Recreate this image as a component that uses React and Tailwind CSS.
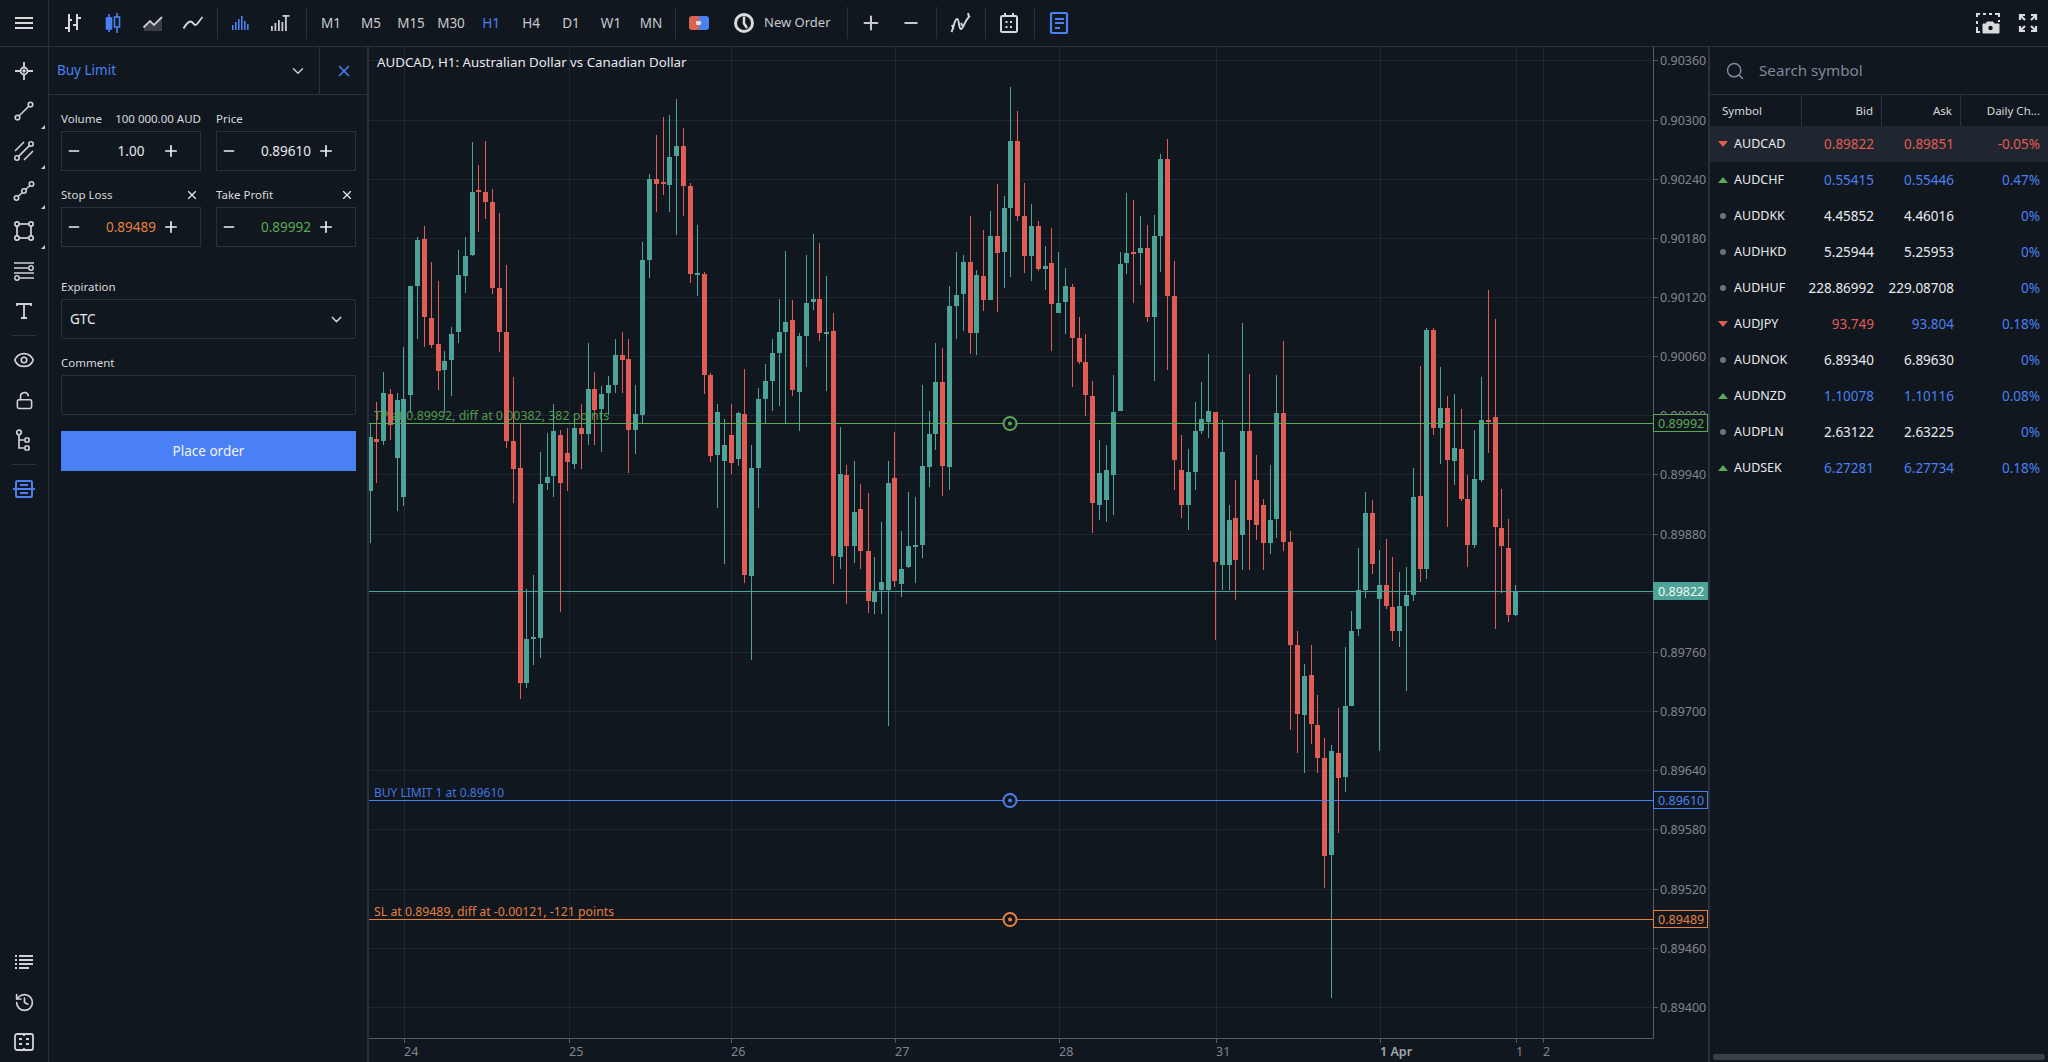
import React from "react";
import { ChevronDown, X, Plus, Minus, Search, Eye, LockOpen, History } from "lucide-react";

const G = "#4ea398";
const R = "#e05c54";
const GREEN = "#5ba855";
const BLUE = "#4a80f0";
const ORANGE = "#e5803f";

// x, color, wick top, body top, body bottom, wick bottom (page px)
const candles = [
  [370,G,423,437,491,543],[376,R,402,439,442,483],[383,G,372,393,441,445],[390,R,389,394,425,440],[397,G,393,400,458,511],
  [403,G,347,399,497,506],[410,G,286,286,395,413],[417,G,237,240,286,339],[424,R,226,239,317,347],[431,R,262,318,345,348],
  [438,R,281,344,371,390],[444,G,351,361,370,413],[451,G,327,334,360,396],[458,G,250,275,332,343],[465,G,237,256,276,293],
  [472,G,142,192,255,256],[478,R,165,190,192,232],[485,R,141,192,202,219],[492,R,189,202,288,294],[499,R,213,288,332,352],
  [506,R,265,332,441,448],[513,R,377,441,469,503],[520,R,423,468,683,699],[526,G,589,639,683,688],[533,G,575,637,639,665],
  [540,G,452,484,638,658],[547,G,433,477,483,490],[553,G,404,431,476,497],[560,R,430,435,483,612],[567,R,428,453,462,491],
  [574,G,418,428,464,469],[581,R,404,428,434,469],[588,G,343,389,434,445],[594,R,372,389,410,445],[601,G,386,394,409,452],
  [608,G,376,385,393,415],[615,G,339,355,385,393],[622,R,332,355,360,393],[628,R,339,359,430,473],[635,G,385,414,430,454],
  [642,G,242,260,415,423],[649,G,174,179,260,278],[656,R,135,179,184,212],[663,R,117,182,184,195],[669,G,115,157,185,212],
  [676,G,99,146,156,235],[683,R,128,146,186,216],[690,R,183,186,274,283],[697,G,225,273,275,296],[704,R,272,274,375,394],
  [710,R,373,375,456,462],[717,G,404,412,455,508],[724,G,419,445,461,564],[731,R,404,435,463,474],[738,G,412,413,459,466],
  [744,R,369,414,575,583],[751,G,445,468,576,660],[758,G,388,399,468,508],[765,G,364,381,399,423],[772,G,339,353,381,411],
  [779,G,299,332,353,406],[785,G,251,322,332,423],[792,R,300,320,390,396],[799,G,333,336,392,431],[806,G,255,303,336,367],
  [813,G,234,299,302,310],[819,R,243,299,333,341],[826,G,276,332,334,391],[833,R,313,331,556,584],[840,G,427,474,557,569],
  [846,R,465,475,546,604],[854,G,461,512,546,563],[860,R,484,509,551,569],[868,R,493,551,601,613],[874,G,557,591,602,614],
  [881,G,522,582,590,614],[888,G,461,483,590,726],[894,R,432,478,581,587],[901,G,531,569,584,597],[908,G,492,546,567,568],
  [915,G,497,545,546,583],[922,G,385,466,545,558],[929,G,411,434,467,487],[935,G,343,382,434,450],[942,R,348,382,466,496],
  [949,G,286,306,467,490],[956,G,252,295,306,339],[963,G,255,262,294,331],[970,R,216,262,333,354],[976,G,270,275,333,355],
  [983,R,230,276,300,311],[990,G,211,236,300,300],[997,R,184,236,253,312],[1004,G,196,208,252,288],[1010,G,87,141,208,277],
  [1017,R,111,141,216,221],[1024,R,183,216,256,273],[1031,G,204,226,256,281],[1038,R,221,226,269,271],[1045,G,246,266,269,290],
  [1051,R,228,263,304,351],[1058,G,252,303,313,313],[1065,G,268,286,302,334],[1072,R,284,287,338,387],[1079,R,317,338,362,364],
  [1085,R,334,362,395,416],[1092,R,381,396,503,533],[1099,G,440,473,505,520],[1106,G,445,470,500,522],[1113,G,375,412,475,515],
  [1120,G,252,264,411,411],[1126,G,193,253,263,274],[1133,R,200,252,253,303],[1140,G,216,248,253,285],[1147,R,225,248,317,322],
  [1154,G,215,236,317,381],[1160,G,154,159,236,272],[1167,R,139,159,296,370],[1174,R,261,296,460,490],[1181,R,435,470,505,518],
  [1188,G,449,472,505,530],[1195,G,402,431,472,490],[1201,G,382,419,431,434],[1208,G,354,411,422,438],[1215,R,412,412,562,640],
  [1222,G,420,452,565,590],[1229,G,505,520,565,590],[1235,R,480,518,560,600],[1242,G,323,431,535,570],[1249,R,374,431,520,570],
  [1256,R,455,480,525,540],[1263,R,499,505,543,570],[1270,G,465,520,543,554],[1276,G,375,413,519,538],[1283,R,341,413,542,551],
  [1290,R,531,542,645,730],[1297,R,631,645,714,753],[1304,G,664,676,715,773],[1311,R,645,675,724,744],[1317,R,695,725,758,773],
  [1324,R,738,758,856,888],[1331,G,745,751,855,998],[1338,R,708,753,778,833],[1345,G,647,706,777,792],[1351,G,611,631,706,706],
  [1358,G,548,590,629,636],[1365,G,492,513,590,598],[1372,R,500,513,564,574],[1379,G,550,585,599,751],[1386,R,539,585,606,609],
  [1392,R,557,607,631,641],[1399,G,572,606,631,647],[1406,G,567,595,606,691],[1413,G,468,497,595,601],[1420,R,366,496,569,582],
  [1426,G,328,330,569,579],[1433,R,328,330,428,435],[1440,G,367,408,428,464],[1447,R,396,408,460,527],[1454,G,394,448,461,485],
  [1461,R,409,449,499,501],[1467,R,475,499,545,567],[1474,G,430,479,545,548],[1481,G,377,420,480,482],[1488,R,290,420,421,453],
  [1495,R,319,417,527,629],[1501,R,489,528,546,593],[1508,R,519,548,615,622],[1515,G,585,591,615,616],
];

const prices = ["0.90360","0.90300","0.90240","0.90180","0.90120","0.90060","0.90000","0.89940","0.89880","0.89820","0.89760","0.89700","0.89640","0.89580","0.89520","0.89460","0.89400"];
const gridY = [60,120,179,238,297,356,415,474,534,593,652,711,770,829,889,948,1007];
const gridX = [404,569,731,895,1059,1216,1380,1516,1543];
const days = [["24",404],["25",569],["26",731],["27",895],["28",1059],["31",1216],["1 Apr",1380],["1",1516],["2",1543]];

const symbols = [
  ["AUDCAD","d","0.89822","0.89851","-0.05%","r","r","r"],
  ["AUDCHF","u","0.55415","0.55446","0.47%","b","b","b"],
  ["AUDDKK","n","4.45852","4.46016","0%","w","w","b"],
  ["AUDHKD","n","5.25944","5.25953","0%","w","w","b"],
  ["AUDHUF","n","228.86992","229.08708","0%","w","w","b"],
  ["AUDJPY","d","93.749","93.804","0.18%","r","b","b"],
  ["AUDNOK","n","6.89340","6.89630","0%","w","w","b"],
  ["AUDNZD","u","1.10078","1.10116","0.08%","b","b","b"],
  ["AUDPLN","n","2.63122","2.63225","0%","w","w","b"],
  ["AUDSEK","u","6.27281","6.27734","0.18%","b","b","b"],
];
const tone = { r: "text-[#e05c54]", b: "text-[#4a80f0]", w: "text-[#e8eaec]" };

function PriceBox({ y, c, text }) {
  return (
    <g>
      <rect x="1653.5" y={y + 0.5} width="54" height="17" fill="#10171f" stroke={c} />
      <text x="1658" y={y + 14} fill={c} fontSize="12.5" shapeRendering="auto">{text}</text>
    </g>
  );
}

function Chart() {
  return (
    <svg viewBox="369 47 1339 1015" className="w-full h-full block" shapeRendering="crispEdges" fontSize="13">
      {gridY.map((y) => <rect key={y} x="369" y={y} width="1284" height="1" fill="#1f2631" />)}
      {gridX.map((x) => <rect key={x} x={x} y="47" width="1" height="991" fill="#1f2631" />)}
      {candles.map(([x, c, wt, bt, bb, wb]) => (
        <g key={x} fill={c}>
          <rect x={x} y={wt} width="1" height={wb - wt} />
          <rect x={x - 2} y={bt} width="5" height={Math.max(bb - bt, 2)} />
        </g>
      ))}

      <rect x="369" y="423" width="1284" height="1" fill={GREEN} />
      <rect x="369" y="591" width="1284" height="1" fill={G} />
      <rect x="369" y="800" width="1284" height="1" fill={BLUE} />
      <rect x="369" y="919" width="1284" height="1" fill={ORANGE} />

      <g shapeRendering="auto">
        <text x="377" y="67" fill="#e8eaec" fontSize="13.3">AUDCAD, H1: Australian Dollar vs Canadian Dollar</text>
        <text x="374" y="420" fill={GREEN} opacity="0.9" fontSize="12.4">TP at 0.89992, diff at 0.00382, 382 points</text>
        <text x="374" y="797" fill={BLUE} opacity="0.9" fontSize="12">BUY LIMIT 1 at 0.89610</text>
        <text x="374" y="916" fill={ORANGE} fontSize="12.3">SL at 0.89489, diff at -0.00121, -121 points</text>
        {[[423, GREEN], [800, BLUE], [919, ORANGE]].map(([y, c]) => (
          <g key={y}>
            <circle cx="1010" cy={y + 0.5} r="6.5" fill="#10171f" stroke={c} strokeWidth="2" />
            <circle cx="1010" cy={y + 0.5} r="2" fill={c} />
          </g>
        ))}
      </g>

      <rect x="1653" y="47" width="1" height="992" fill="#555b66" />
      <rect x="369" y="1038" width="1285" height="1" fill="#555b66" />
      {gridY.map((y, i) => (
        <g key={y}>
          <rect x="1653" y={y} width="5" height="1" fill="#555b66" />
          <text x="1660" y={y + 5} fill="#80868d" shapeRendering="auto" fontSize="12.5">{prices[i]}</text>
        </g>
      ))}
      {days.map(([t, x]) => (
        <g key={t}>
          <rect x={x} y="1039" width="1" height="4" fill="#555b66" />
          <text x={x} y="1056" fill={t === "1 Apr" ? "#a5a9ae" : "#80868d"} fontWeight={t === "1 Apr" ? 600 : 400} shapeRendering="auto" fontSize="12.5">{t}</text>
        </g>
      ))}

      <PriceBox y={414} c={GREEN} text="0.89992" />
      <rect x="1653" y="582" width="55" height="18" fill={G} />
      <text x="1658" y="596" fill="#f4f6f6" fontSize="12.5" shapeRendering="auto">0.89822</text>
      <PriceBox y={791} c={BLUE} text="0.89610" />
      <PriceBox y={910} c={ORANGE} text="0.89489" />
    </svg>
  );
}

const Ico = ({ children, className = "text-[#d8dadc]", size = 24 }) => (
  <svg width={size} height={size} viewBox="0 0 24 24" fill="none" stroke="currentColor" strokeWidth="1.7" className={className}>
    {children}
  </svg>
);

const TopBtn = ({ children, active }) => (
  <div className={"w-[40px] h-full flex items-center justify-center shrink-0 " + (active ? "text-[#4a80f0]" : "text-[#c8cacd]")}>{children}</div>
);
const TopSep = ({ w = "w-[8px]" }) => (
  <div className={w + " h-full flex items-center justify-center shrink-0"}>
    <div className="w-px h-[32px] bg-[#2a303c]" />
  </div>
);

function TopBar() {
  return (
    <div className="h-[47px] shrink-0 flex border-b border-[#2a303c]">
      <div className="w-[49px] shrink-0 border-r border-[#2a303c] flex items-center justify-center">
        <div className="w-[18px] flex flex-col gap-[3px]">
          <div className="h-[2px] bg-[#d8dadc]" />
          <div className="h-[2px] bg-[#d8dadc]" />
          <div className="h-[2px] bg-[#d8dadc]" />
        </div>
      </div>
      <div className="w-[4px] shrink-0" />
      <TopBtn>
        <Ico><path d="M8 3v18M8 9h3M4 17h4M16 3v16M16 7h4M12 14h4" strokeWidth="2" /></Ico>
      </TopBtn>
      <TopBtn active>
        <svg width="24" height="24" viewBox="0 0 24 24" fill="none" stroke="currentColor" strokeWidth="1.6">
          <path d="M8 3v18M16 2v20" />
          <rect x="5.5" y="7" width="5" height="11" fill="currentColor" />
          <rect x="13.5" y="6" width="5" height="10" fill="#10171f" />
        </svg>
      </TopBtn>
      <TopBtn>
        <svg width="24" height="24" viewBox="0 0 24 24" fill="none">
          <path d="M3 20l0-4 6-6 4 4 8-8v14z" fill="#3a3f46" />
          <path d="M2.5 16.5l6.5-6.5 4 4 8-8" stroke="#c8cacd" strokeWidth="1.8" />
        </svg>
      </TopBtn>
      <TopBtn>
        <Ico><path d="M2.5 17.5c3-5 4.5-7 7-7s3 3.5 5 3.5 3.5-4 7-8" strokeWidth="1.8" /></Ico>
      </TopBtn>
      <TopSep />
      <TopBtn active>
        <svg width="20" height="20" viewBox="0 0 20 20" fill="currentColor">
          <rect x="1" y="12" width="1.6" height="5" /><rect x="4" y="9" width="1.6" height="8" /><rect x="7" y="6" width="1.6" height="11" />
          <rect x="10" y="3" width="1.6" height="14" /><rect x="13" y="8" width="1.6" height="9" /><rect x="16" y="11" width="1.6" height="6" />
        </svg>
      </TopBtn>
      <TopBtn>
        <svg width="22" height="22" viewBox="0 0 22 22" fill="currentColor">
          <rect x="1" y="14" width="1.8" height="5" /><rect x="4.5" y="11" width="1.8" height="8" /><rect x="8" y="8" width="1.8" height="11" />
          <rect x="11.5" y="10" width="1.8" height="9" /><rect x="15" y="4" width="1.8" height="15" /><rect x="12.5" y="3" width="7" height="1.8" />
        </svg>
      </TopBtn>
      <TopSep w="w-[10px]" />
      {["M1", "M5", "M15", "M30", "H1", "H4", "D1", "W1", "MN"].map((t) => (
        <div key={t} className={"w-[40px] shrink-0 flex items-center justify-center text-[13.5px] " + (t === "H1" ? "text-[#4a80f0]" : "text-[#c8cacd]")}>{t}</div>
      ))}
      <TopSep />
      <TopBtn>
        <svg width="20" height="14" viewBox="0 0 20 14">
          <path d="M3 0h7v14H3a3 3 0 0 1-3-3V3a3 3 0 0 1 3-3z" fill="#d9634f" />
          <path d="M10 0h7a3 3 0 0 1 3 3v8a3 3 0 0 1-3 3h-7z" fill="#4a80f0" />
          <rect x="7" y="5" width="5" height="4" rx="1" fill="#dddddd" />
        </svg>
      </TopBtn>
      <div className="w-[124px] shrink-0 flex items-center pl-[15px] gap-[10px] text-[13px] text-[#c8cacd]">
        <svg width="20" height="20" viewBox="0 0 20 20" fill="none" stroke="#d8dadc">
          <circle cx="10" cy="10" r="8.5" strokeWidth="3" />
          <path d="M10 3.5v7l3 4.5" strokeWidth="2.5" />
        </svg>
        <span>New Order</span>
      </div>
      <TopSep />
      <TopBtn><Plus size={22} strokeWidth={2.2} /></TopBtn>
      <TopBtn><Minus size={20} strokeWidth={2.2} /></TopBtn>
      <TopSep w="w-[10px]" />
      <TopBtn>
        <Ico>
          <path d="M2.5 21c2.500-5 3-13 5.500-13s1.500 10 4 10 3.500-9 9-13" strokeWidth="1.900" />
          <path d="M3 14l1.500 4M12 12l1.500 3M19 2l1 4" strokeWidth="1.900" />
        </Ico>
      </TopBtn>
      <TopSep />
      <TopBtn>
        <svg width="20" height="22" viewBox="0 0 20 22" fill="none" stroke="#d8dadc" strokeWidth="2">
          <rect x="2" y="4" width="16" height="16" rx="1.5" />
          <path d="M6 1v4M14 1v4" />
          <path d="M6.5 10h2M11 10h2M6.5 15h2M11 15h2" strokeWidth="2" />
        </svg>
      </TopBtn>
      <TopSep w="w-[10px]" />
      <TopBtn active>
        <svg width="20" height="24" viewBox="0 0 20 24" fill="none" stroke="currentColor" strokeWidth="2.2">
          <rect x="2" y="2" width="16" height="20" rx="1" />
          <path d="M6 8h9M6 12h9M6 17h5" />
        </svg>
      </TopBtn>
      <div className="flex-1" />
      <TopBtn>
        <svg width="24" height="22" viewBox="0 0 24 22" fill="none" stroke="#d8dadc" strokeWidth="2">
          <path d="M1 5V2h3M7 2h3M13 2h3M19 2h4v3M1 9v3M1 15v3M1 18v2h3M23 8v2" />
          <path d="M7 12h3l1-2h6l1 2h5v9H7z" fill="#d8dadc" strokeWidth="1" />
          <circle cx="14.500" cy="16" r="2.200" fill="#10171f" stroke="none" />
        </svg>
      </TopBtn>
      <TopBtn>
        <svg width="20" height="20" viewBox="0 0 20 20" fill="none" stroke="#d8dadc" strokeWidth="2.2">
          <path d="M2 7V2h5M2 2l5 5M18 7V2h-5M18 2l-5 5M2 13v5h5M2 18l5-5M18 13v5h-5M18 18l-5-5" />
        </svg>
      </TopBtn>
    </div>
  );
}

const SideBtn = ({ children, corner, active }) => (
  <div className={"relative h-[40px] flex items-center justify-center " + (active ? "text-[#4a80f0]" : "text-[#d0d2d5]")}>
    {children}
    {corner && <div className="absolute right-[3px] bottom-[2px] w-0 h-0 border-l-[4px] border-l-transparent border-b-[4px] border-b-[#d0d2d5]" />}
  </div>
);
const SideSep = () => <div className="h-[9px] flex items-center justify-center"><div className="w-[24px] h-px bg-[#2a303c]" /></div>;

function Sidebar() {
  return (
    <div className="w-[49px] shrink-0 border-r border-[#2a303c] pt-[4px] flex flex-col">
      <SideBtn>
        <svg width="20" height="20" viewBox="0 0 20 20" fill="none" stroke="currentColor" strokeWidth="1.8">
          <circle cx="10" cy="10" r="3.5" />
          <circle cx="10" cy="10" r="0.8" fill="currentColor" />
          <path d="M10 1v5M10 14v5M1 10h5M14 10h5" />
        </svg>
      </SideBtn>
      <SideBtn corner>
        <svg width="22" height="22" viewBox="0 0 22 22" fill="none" stroke="currentColor" strokeWidth="1.6">
          <circle cx="4.5" cy="17.5" r="2.3" /><circle cx="17.5" cy="4.5" r="2.3" /><path d="M6.2 15.8L15.8 6.2" />
        </svg>
      </SideBtn>
      <SideBtn corner>
        <svg width="22" height="22" viewBox="0 0 22 22" fill="none" stroke="currentColor" strokeWidth="1.6">
          <circle cx="4" cy="18" r="2.2" /><circle cx="18" cy="4" r="2.2" /><path d="M5.6 16.4L16.4 5.6M2 11L11 2M11 20l9-9" />
        </svg>
      </SideBtn>
      <SideBtn corner>
        <svg width="22" height="22" viewBox="0 0 22 22" fill="none" stroke="currentColor" strokeWidth="1.6">
          <circle cx="3.5" cy="18" r="2.2" /><circle cx="11" cy="11" r="2.2" /><circle cx="18.5" cy="4" r="2.2" /><path d="M5 16.5l4.500-4M12.500 9.500L17 5.500" />
        </svg>
      </SideBtn>
      <SideBtn corner>
        <svg width="22" height="22" viewBox="0 0 22 22" fill="none" stroke="currentColor" strokeWidth="1.7">
          <rect x="4" y="4" width="14" height="14" />
          <circle cx="4" cy="4" r="2.2" fill="#10171f" /><circle cx="18" cy="4" r="2.2" fill="#10171f" /><circle cx="4" cy="18" r="2.2" fill="#10171f" /><circle cx="18" cy="18" r="2.2" fill="#10171f" />
        </svg>
      </SideBtn>
      <SideBtn>
        <svg width="22" height="22" viewBox="0 0 22 22" fill="none" stroke="currentColor" strokeWidth="1.5">
          <path d="M1 3h20M1 8h14M1 13h20M7 18h14" />
          <circle cx="18" cy="8" r="2.2" fill="#10171f" /><circle cx="4" cy="18" r="2.2" fill="#10171f" />
        </svg>
      </SideBtn>
      <SideBtn>
        <svg width="20" height="20" viewBox="0 0 20 20" fill="none" stroke="currentColor" strokeWidth="1.8">
          <path d="M3 5V3h14v2M10 3v14M7 17h6" />
        </svg>
      </SideBtn>
      <SideSep />
      <SideBtn><Eye size={22} strokeWidth={1.8} /></SideBtn>
      <SideBtn><LockOpen size={19} strokeWidth={2} /></SideBtn>
      <SideBtn>
        <svg width="20" height="22" viewBox="0 0 20 22" fill="none" stroke="currentColor" strokeWidth="1.7">
          <circle cx="5" cy="3.5" r="2.3" /><path d="M5 6v13h5M5 11h5" />
          <rect x="11" y="9" width="4" height="4" rx="1" /><rect x="11" y="17" width="4" height="4" rx="1" />
        </svg>
      </SideBtn>
      <SideSep />
      <SideBtn active>
        <svg width="22" height="20" viewBox="0 0 22 20" fill="none" stroke="currentColor" strokeWidth="2">
          <rect x="3" y="2" width="16" height="16" rx="1.5" /><path d="M0 10h22M7 6h8M7 14h8" />
        </svg>
      </SideBtn>
      <div className="flex-1" />
      <SideBtn>
        <svg width="20" height="16" viewBox="0 0 20 16" fill="none" stroke="currentColor" strokeWidth="2">
          <path d="M1 2h2M1 6h2M1 10h2M1 14h2M5 2h14M5 6h14M5 10h14M5 14h10" />
        </svg>
      </SideBtn>
      <SideBtn><History size={21} strokeWidth={1.9} /></SideBtn>
      <SideBtn>
        <svg width="22" height="20" viewBox="0 0 22 20" fill="none" stroke="currentColor" strokeWidth="1.8">
          <rect x="2" y="2" width="18" height="16" rx="2" /><path d="M6 7h3M6 12h3M13 7h3M13 12h3M11 2v2M11 16v2" />
        </svg>
      </SideBtn>
    </div>
  );
}

const Stepper = ({ value, color = "text-[#e8eaec]" }) => (
  <div className="h-[40px] border border-[#2a303c] grid grid-cols-[44px_1fr_44px] items-center">
    <Minus size={16} strokeWidth={2.2} className="text-[#f0f1f2] ml-[4px]" />
    <span className={"text-[13.5px] text-center " + color}>{value}</span>
    <Plus size={18} strokeWidth={2.2} className="text-[#f0f1f2] ml-[6px]" />
  </div>
);

function OrderPanel() {
  return (
    <div className="w-[320px] shrink-0 flex flex-col border-r-2 border-[#2a303c]">
      <div className="h-[48px] shrink-0 flex border-b border-[#2a303c]">
        <div className="flex-1 flex items-center justify-between pl-[8px] pr-[12px] border-r border-[#2a303c] text-[13.5px] text-[#4a80f0]">
          <span>Buy Limit</span>
          <ChevronDown size={18} className="text-[#c8cacd]" />
        </div>
        <div className="w-[47px] flex items-center justify-center"><X size={18} className="text-[#4a80f0]" strokeWidth={2.2} /></div>
      </div>
      <div className="pl-[12px] pr-[11px] pt-[16px] flex flex-col text-[11.5px] text-[#d8dadc]">
        <div className="grid grid-cols-2 gap-x-[15px]">
          <div>
            <div className="h-[20px] flex justify-between items-start leading-[16px]"><span>Volume</span><span>100 000.00 AUD</span></div>
            <Stepper value="1.00" />
          </div>
          <div>
            <div className="h-[20px] leading-[16px]">Price</div>
            <Stepper value="0.89610" />
          </div>
          <div className="mt-[16px]">
            <div className="h-[20px] flex justify-between items-start leading-[16px]"><span>Stop Loss</span><X size={14} className="text-[#e8eaec] mr-[2px] mt-[1px]" /></div>
            <Stepper value="0.89489" color="text-[#e5803f]" />
          </div>
          <div className="mt-[16px]">
            <div className="h-[20px] flex justify-between items-start leading-[16px]"><span>Take Profit</span><X size={14} className="text-[#e8eaec] mr-[2px] mt-[1px]" /></div>
            <Stepper value="0.89992" color="text-[#5ba855]" />
          </div>
        </div>
        <div className="mt-[32px] h-[20px] leading-[16px]">Expiration</div>
        <div className="h-[40px] border border-[#2a303c] rounded-[2px] flex items-center justify-between pl-[8px] pr-[10px] text-[13.5px] text-[#e8eaec]">
          <span>GTC</span>
          <ChevronDown size={17} className="text-[#c8cacd]" />
        </div>
        <div className="mt-[16px] h-[20px] leading-[16px]">Comment</div>
        <div className="h-[40px] border border-[#2a303c] rounded-[2px]" />
        <div className="mt-[16px] h-[40px] bg-[#4a80f5] flex items-center justify-center text-[13.5px] text-[#eef2fb]">Place order</div>
      </div>
    </div>
  );
}

function Arrow({ kind }) {
  if (kind === "d") return <div className="w-0 h-0 border-l-[5px] border-r-[5px] border-t-[6px] border-l-transparent border-r-transparent border-t-[#e05c54]" />;
  if (kind === "u") return <div className="w-0 h-0 border-l-[5px] border-r-[5px] border-b-[6px] border-l-transparent border-r-transparent border-b-[#5ba855]" />;
  return <div className="w-[6px] h-[6px] rounded-full bg-[#6a717c]" />;
}

function Watchlist() {
  return (
    <div className="w-[340px] shrink-0 border-l-2 border-[#2a303c] flex flex-col">
      <div className="h-[48px] shrink-0 flex items-center gap-[14px] pl-[15px] border-b border-[#2a303c]">
        <Search size={20} className="text-[#7d8a98]" strokeWidth={1.8} />
        <span className="text-[15.2px] text-[#7d8a98]">Search symbol</span>
      </div>
      <div className="h-[31px] shrink-0 flex text-[11.5px] text-[#d8dadc]">
        <div className="w-[92px] pl-[12px] flex items-center border-r border-[#2a303c]">Symbol</div>
        <div className="w-[80px] pr-[8px] flex items-center justify-end border-r border-[#2a303c]">Bid</div>
        <div className="w-[79px] pr-[8px] flex items-center justify-end border-r border-[#2a303c]">Ask</div>
        <div className="w-[85px] pr-[6px] flex items-center justify-end truncate">Daily Ch...</div>
      </div>
      {symbols.map(([s, dir, bid, ask, pct, bc, ac, pc], i) => (
        <div key={s} className={"h-[36px] shrink-0 flex items-center text-[13.5px] " + (i === 0 ? "bg-[#20262f]" : "")}>
          <div className="w-[24px] flex justify-center pl-[2px]"><Arrow kind={dir} /></div>
          <div className="w-[70px] text-[12.5px] text-[#e8eaec]">{s}</div>
          <div className={"w-[70px] text-right whitespace-nowrap " + tone[bc]}>{bid}</div>
          <div className={"w-[80px] text-right whitespace-nowrap " + tone[ac]}>{ask}</div>
          <div className={"w-[86px] text-right " + tone[pc]}>{pct}</div>
        </div>
      ))}
      <div className="flex-1" />
      <div className="h-[6px] shrink-0 mb-[2px] mx-[3px] rounded-full bg-[#3a3f48]" />
    </div>
  );
}

export default function App() {
  return (
    <div className="w-[2048px] h-[1062px] overflow-hidden flex flex-col bg-[#10171f] text-[#d8dadc] font-['Noto_Sans',sans-serif]">
      <TopBar />
      <div className="flex-1 min-h-0 flex">
        <Sidebar />
        <OrderPanel />
        <div className="flex-1 min-w-0"><Chart /></div>
        <Watchlist />
      </div>
    </div>
  );
}
